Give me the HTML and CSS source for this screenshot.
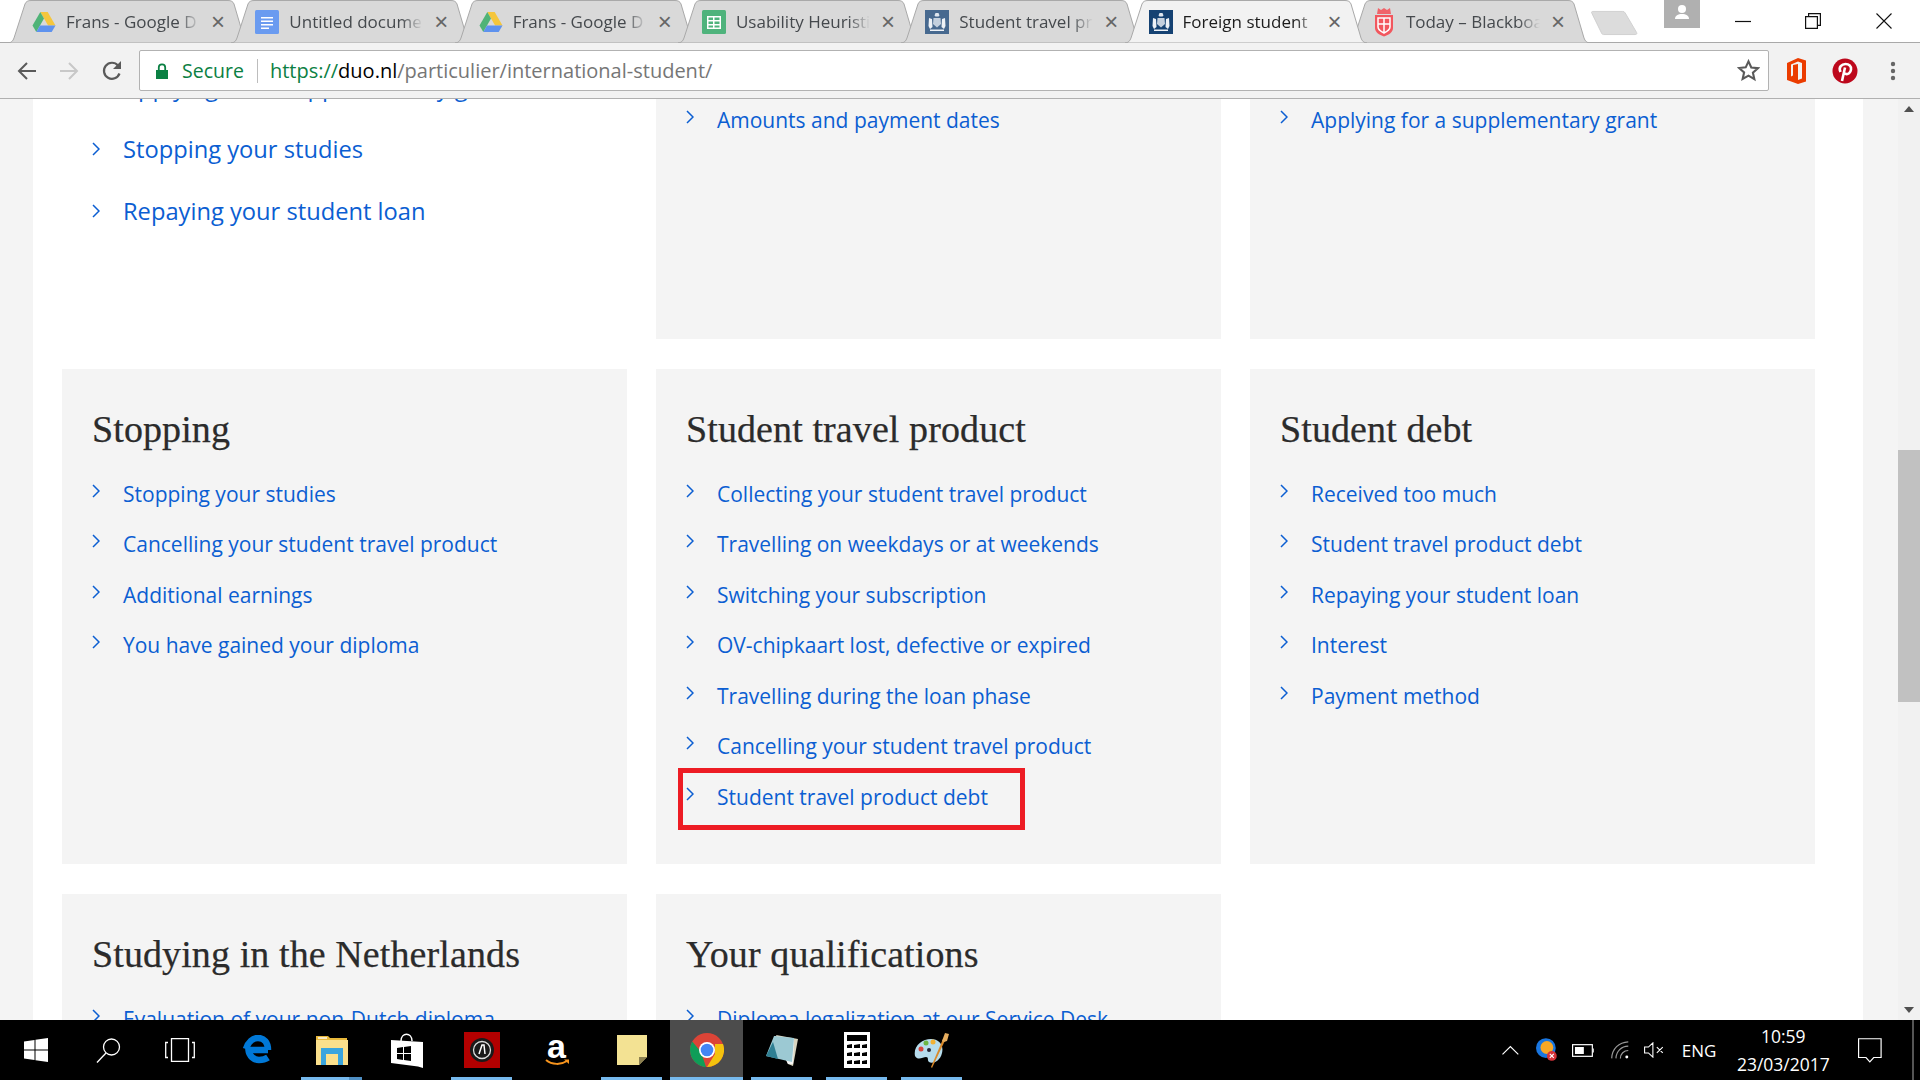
FILE: index.html
```html
<!DOCTYPE html>
<html lang="en">
<head>
<meta charset="utf-8">
<title>Foreign student</title>
<link rel="stylesheet" href="styles.css">
</head>
<body>
<svg class="defs" width="0" height="0" aria-hidden="true">
  <symbol id="tabshape" viewBox="0 0 242 43" preserveAspectRatio="none">
    <path d="M0 43C3 43 5 41 6 38L17 4C18 1.500 20 .5 23 .5H220C223 .5 225 1.500 226 4L236 38C237 41 239 43 242 43Z"/>
  </symbol>
  <symbol id="drive" viewBox="0 0 24 24">
    <path fill="#f5c63c" d="M8.300 2h7.400L23.500 15.500h-7.400z"/>
    <path fill="#4fb377" d="M8.300 2l3.700 6.500L4.300 22 .5 15.500z"/>
    <path fill="#5e92ee" d="M8 15.500h15.500L19.700 22H4.300z"/>
  </symbol>
  <symbol id="docs" viewBox="0 0 24 24">
    <rect width="24" height="24" rx="1.500" fill="#6a9bf0"/>
    <path fill="#fff" d="M6 7h12v1.500H6zM6 10.500h12V12H6zM6 14h12v1.500H6zM6 17.500h8V19H6z"/>
  </symbol>
  <symbol id="sheets" viewBox="0 0 24 24">
    <rect width="24" height="24" rx="1.500" fill="#4fb37c"/>
    <path fill="#fff" d="M5 6h14v13H5zM6.500 7.500V10H11V7.500zm6 0V10h5V7.500zm-6 4V14H11v-2.500zm6 0V14h5v-2.500zm-6 4v2H11v-2zm6 0v2h5v-2z"/>
  </symbol>
  <symbol id="crest" viewBox="0 0 24 24">
    <rect width="24" height="24" fill="currentColor"/>
    <path fill="#dfe6ef" d="M10.500 3h3l1 2.500-1 1h-3l-1-1z"/>
    <path fill="#c4d0de" d="M8.500 8h7l.5 6-4 3.500L8 14z"/>
    <path fill="#eef2f7" d="M4 8l3 1 .5 8L5 19l-1.500-3zM20 8l-3 1-.5 8 2.500 2 1.500-3zM5 19.500h14v1.500H5z"/>
  </symbol>
  <symbol id="rug" viewBox="0 0 24 30">
    <path fill="#f0646a" d="M6 1l3 2 3-2 3 2 3-2 1 6H5z"/>
    <path fill="#f2575e" d="M3 8h18v13c0 4-4 7-9 8.500C7 28 3 25 3 21z"/>
    <path fill="none" stroke="#fff" stroke-width="1.500" d="M6 11h12v9c0 3-3 4.500-6 6-3-1.500-6-3-6-6zM12 11v15M6 17h12"/>
  </symbol>
</svg>

<header class="tabstrip">
  <div class="tabs">
    <div class="tab"><svg class="tab-bg"><use href="#tabshape"/></svg><svg class="fav"><use href="#drive"/></svg><span class="tab-title">Frans - Google D</span><span class="tab-x">×</span></div>
    <div class="tab"><svg class="tab-bg"><use href="#tabshape"/></svg><svg class="fav"><use href="#docs"/></svg><span class="tab-title">Untitled docume</span><span class="tab-x">×</span></div>
    <div class="tab"><svg class="tab-bg"><use href="#tabshape"/></svg><svg class="fav"><use href="#drive"/></svg><span class="tab-title">Frans - Google D</span><span class="tab-x">×</span></div>
    <div class="tab"><svg class="tab-bg"><use href="#tabshape"/></svg><svg class="fav"><use href="#sheets"/></svg><span class="tab-title">Usability Heuristi</span><span class="tab-x">×</span></div>
    <div class="tab"><svg class="tab-bg"><use href="#tabshape"/></svg><svg class="fav fav-dim"><use href="#crest"/></svg><span class="tab-title">Student travel pr</span><span class="tab-x">×</span></div>
    <div class="tab tab-active"><svg class="tab-bg"><use href="#tabshape"/></svg><svg class="fav fav-navy"><use href="#crest"/></svg><span class="tab-title">Foreign student</span><span class="tab-x">×</span></div>
    <div class="tab"><svg class="tab-bg"><use href="#tabshape"/></svg><svg class="fav fav-rug" viewBox="0 0 24 30"><use href="#rug"/></svg><span class="tab-title">Today – Blackboa</span><span class="tab-x">×</span></div>
  </div>
  <svg class="newtab" viewBox="0 0 50 26"><path d="M2 3C1 1.500 2 1 3 1H34C35 1 36 1.500 36.500 2.500L48.500 23C49 24 48.500 25 47 25H14C13 25 12.500 24.500 12 23.500Z"/></svg>
  <div class="profile"><svg viewBox="0 0 36 28" width="36" height="28"><circle cx="18" cy="9" r="4" fill="#fff"/><path fill="#fff" d="M11 19c0-3.500 3-5 7-5s7 1.500 7 5z"/></svg></div>
  <div class="winctl">
    <div class="winbtn"><svg width="16" height="16" viewBox="0 0 16 16"><path d="M0 8.500h16" stroke="#111" stroke-width="1.200"/></svg></div>
    <div class="winbtn"><svg width="16" height="16" viewBox="0 0 16 16" fill="none" stroke="#111" stroke-width="1.200"><path d="M.6 3.600h11.800v11.800H.6zM3.600 3.600V.6h11.800v11.800h-3"/></svg></div>
    <div class="winbtn winbtn-close"><svg width="16" height="16" viewBox="0 0 16 16"><path d="M.5.500l15 15M15.500.5l-15 15" stroke="#111" stroke-width="1.100"/></svg></div>
  </div>
</header>

<nav class="toolbar">
  <div class="navicons">
    <svg width="20" height="20" viewBox="0 0 20 20" fill="none" stroke="#5a5a5a" stroke-width="2"><path d="M19 10H2M10 2l-8 8 8 8"/></svg>
    <svg width="20" height="20" viewBox="0 0 20 20" fill="none" stroke="#c8c8c8" stroke-width="2"><path d="M1 10h17M10 2l8 8-8 8"/></svg>
    <svg width="22" height="22" viewBox="0 0 22 22" fill="none"><path d="M18.500 13.500A8 8 0 1 1 17 5.500" stroke="#5a5a5a" stroke-width="2.200"/><path d="M20 1v8h-8z" fill="#5a5a5a"/></svg>
  </div>
  <div class="omnibox">
    <svg class="lock" width="12" height="16" viewBox="0 0 12 16"><path fill="#0b8043" d="M0 7h12v9H0z"/><path fill="none" stroke="#0b8043" stroke-width="1.800" d="M2.800 7V4.500a3.200 3.200 0 0 1 6.400 0V7"/></svg>
    <span class="secure">Secure</span>
    <span class="omni-sep"></span>
    <span class="url"><span class="url-green">https://</span><span class="url-host">duo.nl</span>/particulier/international-student/</span>
    <svg class="star" width="23" height="23" viewBox="0 0 24 24" fill="none" stroke="#5a5a5a" stroke-width="2.200"><path d="M12 2.500l2.900 6.400 6.900.7-5.200 4.600 1.500 6.800L12 17.400 5.900 20.800l1.500-6.800-5.200-4.600 6.900-.7z"/></svg>
  </div>
  <div class="exticons">
    <svg width="20" height="26" viewBox="0 0 20 26"><path fill="#eb3c00" d="M12 0l8 2.500v21L12 26 1 22V5zm0 3.500L5 6.500v12l2-1V7l5-1v16l4-1.500V5z"/></svg>
    <svg width="26" height="26" viewBox="0 0 26 26"><circle cx="13" cy="13" r="12.500" fill="#bd081c"/><path fill="none" stroke="#fff" stroke-width="2.600" d="M8.500 14C6 9 10 6 13.500 6c3.500 0 6 2 5.500 5.500-.5 3.500-3 5-5 4.500-1-.3-1.500-1-1.500-1.500M13 9.500L10 23"/></svg>
    <svg class="dots" width="6" height="20" viewBox="0 0 6 20"><circle cx="3" cy="3" r="2.200" fill="#666"/><circle cx="3" cy="10" r="2.200" fill="#666"/><circle cx="3" cy="17" r="2.200" fill="#666"/></svg>
  </div>
</nav>

<div class="viewport">
  <main class="page">
    <div class="sheet">
      <section class="card card-plain">
        <ul class="links links-large">
          <li><svg class="chev"><path d="M1 1l6 6-6 6"/></svg><a>Applying for a supplementary grant</a></li>
          <li><svg class="chev"><path d="M1 1l6 6-6 6"/></svg><a>Stopping your studies</a></li>
          <li><svg class="chev"><path d="M1 1l6 6-6 6"/></svg><a>Repaying your student loan</a></li>
        </ul>
      </section>
      <section class="card card-tail">
        <ul class="links">
          <li><svg class="chev"><path d="M1 1l6 6-6 6"/></svg><a>Amounts and payment dates</a></li>
        </ul>
      </section>
      <section class="card card-tail">
        <ul class="links">
          <li><svg class="chev"><path d="M1 1l6 6-6 6"/></svg><a>Applying for a supplementary grant</a></li>
        </ul>
      </section>

      <section class="card">
        <h2>Stopping</h2>
        <ul class="links">
          <li><svg class="chev"><path d="M1 1l6 6-6 6"/></svg><a>Stopping your studies</a></li>
          <li><svg class="chev"><path d="M1 1l6 6-6 6"/></svg><a>Cancelling your student travel product</a></li>
          <li><svg class="chev"><path d="M1 1l6 6-6 6"/></svg><a>Additional earnings</a></li>
          <li><svg class="chev"><path d="M1 1l6 6-6 6"/></svg><a>You have gained your diploma</a></li>
        </ul>
      </section>
      <section class="card">
        <h2>Student travel product</h2>
        <ul class="links">
          <li><svg class="chev"><path d="M1 1l6 6-6 6"/></svg><a>Collecting your student travel product</a></li>
          <li><svg class="chev"><path d="M1 1l6 6-6 6"/></svg><a>Travelling on weekdays or at weekends</a></li>
          <li><svg class="chev"><path d="M1 1l6 6-6 6"/></svg><a>Switching your subscription</a></li>
          <li><svg class="chev"><path d="M1 1l6 6-6 6"/></svg><a>OV-chipkaart lost, defective or expired</a></li>
          <li><svg class="chev"><path d="M1 1l6 6-6 6"/></svg><a>Travelling during the loan phase</a></li>
          <li><svg class="chev"><path d="M1 1l6 6-6 6"/></svg><a>Cancelling your student travel product</a></li>
          <li><svg class="chev"><path d="M1 1l6 6-6 6"/></svg><a>Student travel product debt</a><span class="redbox"></span></li>
        </ul>
      </section>
      <section class="card">
        <h2>Student debt</h2>
        <ul class="links">
          <li><svg class="chev"><path d="M1 1l6 6-6 6"/></svg><a>Received too much</a></li>
          <li><svg class="chev"><path d="M1 1l6 6-6 6"/></svg><a>Student travel product debt</a></li>
          <li><svg class="chev"><path d="M1 1l6 6-6 6"/></svg><a>Repaying your student loan</a></li>
          <li><svg class="chev"><path d="M1 1l6 6-6 6"/></svg><a>Interest</a></li>
          <li><svg class="chev"><path d="M1 1l6 6-6 6"/></svg><a>Payment method</a></li>
        </ul>
      </section>

      <section class="card">
        <h2>Studying in the Netherlands</h2>
        <ul class="links">
          <li><svg class="chev"><path d="M1 1l6 6-6 6"/></svg><a>Evaluation of your non-Dutch diploma</a></li>
        </ul>
      </section>
      <section class="card">
        <h2>Your qualifications</h2>
        <ul class="links">
          <li><svg class="chev"><path d="M1 1l6 6-6 6"/></svg><a>Diploma legalization at our Service Desk</a></li>
        </ul>
      </section>
    </div>
  </main>
  <aside class="scrollbar">
    <svg class="sb-arrow" width="10" height="6" viewBox="0 0 10 6"><path d="M5 0l5 6H0z" fill="#505050"/></svg>
    <div class="sb-track"><div class="sb-thumb"></div></div>
    <svg class="sb-arrow" width="10" height="6" viewBox="0 0 10 6"><path d="M5 6L0 0h10z" fill="#505050"/></svg>
  </aside>
</div>

<footer class="taskbar">
  <div class="tb-sys">
    <div class="tb-slot"><svg width="24" height="24" viewBox="0 0 24 24"><path fill="#fff" d="M0 3.500l10.500-1.500v9.500H0zM11.500 1.800L24 0v11.500H11.500zM0 12.500h10.500V22L0 20.500zM11.500 12.500H24V24l-12.500-1.800z"/></svg></div>
    <div class="tb-slot"><svg width="25" height="25" viewBox="0 0 25 25" fill="none" stroke="#fff" stroke-width="1.300"><circle cx="15.500" cy="9" r="8"/><path d="M10 15L1 24.500"/></svg></div>
    <div class="tb-slot"><svg width="30" height="24" viewBox="0 0 30 24" fill="none" stroke="#fff" stroke-width="1.300"><path d="M6.500.7h17v22.600h-17zM3 4.500H.7v15H3M27 4.500h2.300v15H27"/></svg></div>
  </div>
  <div class="tb-apps">
    <div class="app"><svg width="30" height="30" viewBox="0 0 30 30"><path fill="none" stroke="#0078d7" stroke-width="6.500" d="M26 15H6.500C7 21 12 25 17 25c3.500 0 6.500-.8 9-2.500M4 14C6 7 11 3 16 3c6 0 10 4.500 10 12"/></svg></div>
    <div class="app app-run app-split"><svg width="32" height="30" viewBox="0 0 32 30"><path fill="#e9b93b" d="M0 1h12l2 2h17v5H0z"/><path fill="#fbe08c" d="M0 5h32v25H0z"/><path fill="#3aa5de" d="M5 30V13h22v17h-5v-11H10v11z"/><path fill="#fff" d="M2 2h9v2H2z" opacity=".7"/></svg></div>
    <div class="app"><svg width="32" height="36" viewBox="0 0 32 36"><path fill="none" stroke="#fff" stroke-width="1.500" d="M10 9c0-9 11-9 11 0"/><path fill="#fff" d="M0 8l32 2v26l-5-1.500L0 31z"/><path fill="#000" d="M6 16l6-1v6H6zM13 15l7-1v7h-7zM6 22h6v6l-6-1zM13 22h7v7l-7-1z"/></svg></div>
    <div class="app app-run"><svg width="36" height="36" viewBox="0 0 36 36"><rect width="36" height="36" fill="#b30000"/><circle cx="18" cy="18" r="12" fill="#1a1a1a"/><circle cx="18" cy="18" r="8.500" fill="none" stroke="#ddd" stroke-width="1.300"/><path d="M15 22l3-9h2l1 9" fill="none" stroke="#fff" stroke-width="1.500"/></svg></div>
    <div class="app"><div class="amazon"><span class="amazon-a">a</span><svg width="24" height="8" viewBox="0 0 24 8"><path fill="none" stroke="#f7941d" stroke-width="2" d="M1 1c6 5 15 5 21 1"/><path fill="#f7941d" d="M19 .5h5v4.500z"/></svg></div></div>
    <div class="app app-run"><svg width="30" height="30" viewBox="0 0 30 30"><path fill="#f3e293" d="M0 0h30v22l-8 8H0z"/><path fill="#8c8050" d="M22 22h8l-8 8z"/></svg></div>
    <div class="app app-chrome app-run"><svg width="34" height="34" viewBox="0 0 34 34"><circle cx="17" cy="17" r="17" fill="#db4437"/><path fill="#0f9d58" d="M17 34A17 17 0 0 1 2.300 8.500L11 19l5 15z"/><path fill="#f4c20d" d="M33 11A17 17 0 0 1 17 34l8-13V11z"/><circle cx="17" cy="17" r="8" fill="#fff"/><circle cx="17" cy="17" r="6.300" fill="#4285f4"/></svg></div>
    <div class="app app-run"><svg width="32" height="32" viewBox="0 0 32 32"><path fill="#d9d5c0" d="M10 1l22 4-5 27-5-2z"/><path fill="#f5f5f5" d="M8 2l20 3-1 25L22 30z"/><path fill="#9cc9d3" d="M8 2l20 2-2 24L0 22z"/><path fill="#2f7f93" d="M0 22l7-14 5 17z"/></svg></div>
    <div class="app app-run"><svg width="26" height="36" viewBox="0 0 26 36"><path fill="#fff" d="M0 0h26v36H0z"/><path d="M3 3h20v6H3zM3 13l5-1v4H3zM10 13l6-1v4h-6zM18 13l5-1v4h-5zM3 21l5-1v4H3zM10 21l6-1v4h-6zM18 21l5-1v4h-5zM3 29l5-1v4H3zM10 29l6-1v4h-6zM18 29l5-1v4h-5z" fill="#000"/></svg></div>
    <div class="app app-run"><svg width="36" height="36" viewBox="0 0 36 36"><path fill="#b6dcec" d="M1 24C-1 14 8 7 17 7c8 0 13 6 11 14-2 9-10 11-13 9-2-2 0-5-3-5-3 0-8 4-11-1z"/><circle cx="7" cy="17" r="2.500" fill="#d8443c"/><circle cx="12" cy="11" r="2.500" fill="#6cb543"/><circle cx="19" cy="10" r="2.500" fill="#f2b133"/><circle cx="15" cy="18" r="2" fill="#223"/><path fill="#d98a2b" d="M29 7l2 1.500L18 36l-1-1z"/><path fill="#e7ae5f" d="M28 9l3-8 4 1-2 7-3 1z"/></svg></div>
  </div>
  <div class="tray">
    <svg width="17" height="10" viewBox="0 0 17 10" fill="none" stroke="#fff" stroke-width="1.200"><path d="M.5 9.500l8-8 8 8"/></svg>
    <svg class="tray-ball" width="22" height="24" viewBox="0 0 22 24"><circle cx="10" cy="10" r="10" fill="#1976e0"/><circle cx="11" cy="9.500" r="6.500" fill="#f9a825"/><circle cx="16" cy="18" r="5" fill="#d6333a"/><path d="M14 16l4 4M18 16l-4 4" stroke="#fff" stroke-width="1.200"/></svg>
    <svg width="23" height="13" viewBox="0 0 23 13"><rect x=".6" y=".6" width="20" height="11.800" fill="none" stroke="#fff" stroke-width="1.200"/><path fill="#fff" d="M3 3h9v7H3zM21.500 4.500H23v4h-1.500z"/></svg>
    <svg width="18" height="18" viewBox="0 0 18 18" fill="none" stroke="#999" stroke-width="1.200"><path d="M.7 17.500C1 8 8 1 17.500.7M5 17.500C5.300 10.500 10.500 5 17.500 5M9.500 17.500c0-4.500 3.500-8 8-8"/><circle cx="16" cy="16" r="1.500" fill="#fff" stroke="none"/></svg>
    <svg width="21" height="16" viewBox="0 0 21 16" fill="none" stroke="#fff" stroke-width="1.100"><path d="M9 .8v14.400L4.500 11H.6V5h3.900zM13 5l6 6M19 5l-6 6"/></svg>
    <span class="tray-lang">ENG</span>
    <div class="clock"><span>10:59</span><span>23/03/2017</span></div>
    <svg class="notif" width="24" height="25" viewBox="0 0 24 25" fill="none" stroke="#fff" stroke-width="1.200"><path d="M.6.600h22.800v19h-7.500L12 24l-3.900-4.400H.6z"/></svg>
    <span class="showdesk"></span>
  </div>
</footer>
</body>
</html>
```
FILE: styles.css
```css
* { box-sizing: border-box; }
html, body { margin: 0; height: 100%; }
body {
  width: 1920px;
  height: 1080px;
  overflow: hidden;
  display: flex;
  flex-direction: column;
  background: #fff;
  font-family: "Open Sans", "Noto Sans", sans-serif;
}
.defs { position: absolute; }

/* tab strip */
.tabstrip {
  height: 42px;
  flex: none;
  display: flex;
  padding-left: 8px;
  background: #fff;
  position: relative;
  z-index: 2;
}
.tabs { display: flex; }
.tab {
  position: relative;
  width: 242px;
  height: 43px;
  margin-right: -18.700px;
  display: flex;
  align-items: center;
  padding: 0 0 0 24px;
}
.tab-active { z-index: 3; }
.tab-bg {
  position: absolute;
  inset: 0;
  width: 100%;
  height: 100%;
  fill: #d9d9d9;
  stroke: #a9a9a9;
  stroke-width: 1px;
}
.tab-active .tab-bg { fill: #f2f2f2; }
.fav { position: relative; width: 24px; height: 24px; flex: none; }
.fav-dim { color: #47698f; }
.fav-navy { color: #154273; }
.fav-rug { height: 30px; }
.tab-title {
  position: relative;
  margin-left: 10px;
  width: 134px;
  flex: none;
  white-space: nowrap;
  font-size: 17px;
  color: #45494d;
  -webkit-mask-image: linear-gradient(90deg, #000 84%, transparent 100%);
  mask-image: linear-gradient(90deg, #000 84%, transparent 100%);
}
.tab-active .tab-title { color: #1c1c1c; }
.tab-x {
  position: relative;
  margin-left: 11px;
  font-size: 24px;
  line-height: 24px;
  color: #666;
  font-family: "Liberation Sans", sans-serif;
}
.newtab {
  width: 50px;
  height: 26px;
  margin: 10px 0 0 18.700px;
  fill: #dcdcdc;
  stroke: #cfcfcf;
  position: relative;
}
.profile {
  width: 36px;
  height: 28px;
  margin-left: 26px;
  background: #b0b0b0;
}
.profile svg { display: block; }
.winctl { display: flex; margin-left: 8px; }
.winbtn {
  width: 70px;
  height: 42px;
  display: flex;
  align-items: center;
  justify-content: center;
}
.winbtn-close { width: 72px; }

/* toolbar */
.toolbar {
  height: 57px;
  flex: none;
  display: flex;
  align-items: center;
  padding: 0 0 0 17px;
  background: #f2f2f2;
  border-top: 1px solid #a9a9a9;
  border-bottom: 1px solid #b0b0b0;
}
.navicons {
  display: flex;
  align-items: center;
  gap: 22px;
  width: 122px;
}
.omnibox {
  width: 1630px;
  height: 41px;
  display: flex;
  align-items: center;
  padding-left: 16px;
  background: #fff;
  border: 1px solid #b2b2b2;
  border-radius: 2px;
}
.lock { flex: none; }
.secure {
  margin-left: 14px;
  font-size: 19.500px;
  color: #0b8043;
}
.omni-sep {
  width: 1px;
  height: 24px;
  margin: 0 12px 0 13px;
  background: #bdbdbd;
}
.url { flex: 1; font-size: 20px; color: #767676; white-space: nowrap; }
.url-green { color: #0b8043; }
.url-host { color: #000; }
.star { margin-right: 8px; }
.exticons {
  display: flex;
  align-items: center;
  margin-left: 17px;
  gap: 0;
}
.exticons svg:nth-child(1) { margin-right: 26px; }
.exticons svg:nth-child(2) { margin-right: 32px; }

/* page */
.viewport {
  flex: 1;
  min-height: 0;
  display: flex;
  background: #f4f4f4;
}
.page {
  width: 1898px;
  overflow: hidden;
  background: #f4f4f4;
}
.sheet {
  width: 1830px;
  margin: -60px 0 0 33px;
  padding-left: 29px;
  background: #fff;
  display: grid;
  grid-template-columns: 565px 565px 565px;
  grid-template-rows: 300px 495px 300px;
  column-gap: 29px;
  row-gap: 30px;
  color: #0b5ed2;
}
.card {
  background: #f4f4f4;
  padding: 35px 30px 0 30px;
}
.card-plain { background: #fff; padding-top: 17px; }
.card-tail { padding-top: 56px; }
h2 {
  margin: 0 0 14.500px;
  font: 400 38px/50px "Liberation Serif", serif;
  letter-spacing: .1px;
  color: #2b2b2b;
  -webkit-text-stroke: .25px #2b2b2b;
}
.links { list-style: none; margin: 0; padding: 0; }
.links li {
  position: relative;
  height: 50.500px;
  display: flex;
  align-items: center;
  font-size: 21px;
  white-space: nowrap;
}
.links-large li { height: 62px; font-size: 23.700px; }
.links-large .chev { margin-bottom: 0; }
.chev {
  width: 8px;
  height: 14px;
  flex: none;
  margin: 0 23px 6px 0;
  fill: none;
  stroke: #0b5ed2;
  stroke-width: 1.500px;
}
.redbox {
  position: absolute;
  left: -8px;
  top: -3.500px;
  width: 347px;
  height: 62px;
  border: 5px solid #ed1c24;
}

/* scrollbar */
.scrollbar {
  width: 22px;
  display: flex;
  flex-direction: column;
  align-items: center;
  background: #f1f1f1;
  padding: 7px 0;
}
.sb-arrow { flex: none; }
.sb-track {
  flex: 1;
  width: 100%;
  padding-top: 338px;
}
.sb-thumb { height: 252px; background: #c1c1c1; }

/* taskbar */
.taskbar {
  height: 60px;
  flex: none;
  display: flex;
  background: #000;
  color: #fff;
}
.tb-sys { display: flex; width: 219px; }
.tb-slot {
  width: 72px;
  display: flex;
  align-items: center;
  justify-content: center;
}
.tb-apps { display: flex; }
.app {
  position: relative;
  width: 75px;
  display: flex;
  align-items: center;
  justify-content: center;
}
.app-run::after {
  content: "";
  position: absolute;
  left: 7px;
  right: 7px;
  bottom: 0;
  height: 3px;
  background: #76b9ed;
}
.app-split::after { background: linear-gradient(90deg, #76b9ed 78%, #4f8fc4 78%); }
.app-chrome { background: #4c4c4c; width: 73px; margin: 0 1px; }
.app-chrome::after { left: 0; right: 0; }
.amazon { display: flex; flex-direction: column; align-items: center; }
.amazon-a {
  font: 700 34px/26px "Liberation Sans", sans-serif;
  color: #fff;
}
.tray {
  margin-left: auto;
  display: flex;
  align-items: center;
  position: relative;
  width: 418px;
  padding-right: 38px;
}
.tray > svg:nth-child(1) { margin-left: 0; }
.tray-ball { margin-left: 17px; }
.tray > svg:nth-child(3) { margin-left: 14px; }
.tray > svg:nth-child(4) { margin-left: 17px; }
.tray > svg:nth-child(5) { margin-left: 15px; }
.tray-lang { margin-left: 17px; font-size: 17px; }
.clock {
  margin-left: 21px;
  width: 92px;
  display: flex;
  flex-direction: column;
  align-items: center;
  font-size: 17.500px;
  line-height: 28px;
  white-space: nowrap;
}
.notif { margin-left: 29px; }
.showdesk {
  position: absolute;
  right: 6px;
  top: 0;
  width: 2px;
  height: 60px;
  background: #555;
}
```
